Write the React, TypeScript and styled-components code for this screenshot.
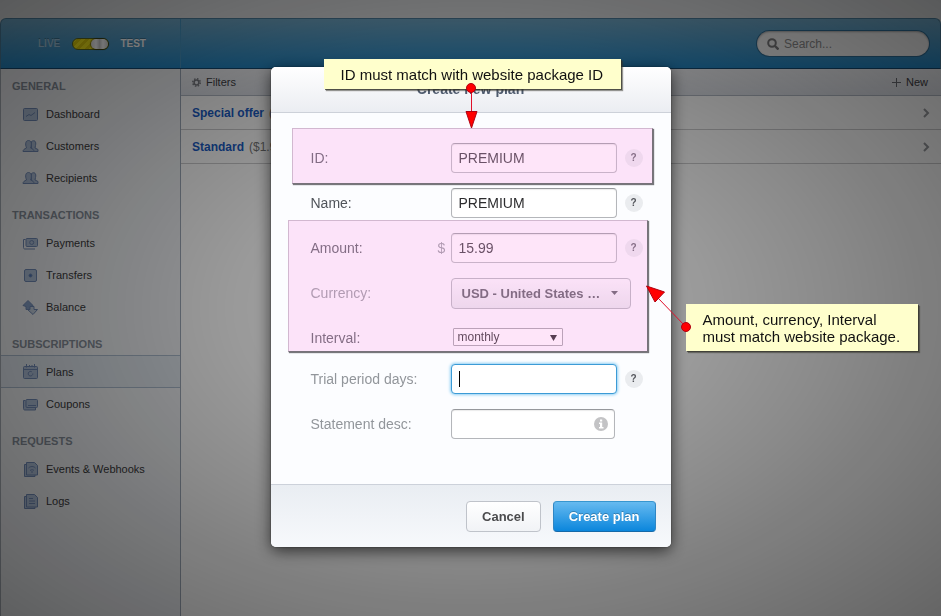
import React from "react";
import styled, { createGlobalStyle, css } from "styled-components";

const GlobalStyle = createGlobalStyle`
  * { box-sizing: border-box; }
  html, body, #root { height: 100%; }
  body {
    margin: 0;
    background: #dfe1e3;
    font-family: "Liberation Sans", Arial, sans-serif;
    overflow: hidden;
  }
  button, input, select { font-family: inherit; margin: 0; }
`;

/* ---------- dashboard ---------- */

const Page = styled.div`
  min-height: 100vh;
  padding-top: 18px;
  display: flex;
  flex-direction: column;
`;

const Window = styled.div`
  flex: 1;
  display: flex;
  flex-direction: column;
`;

const Header = styled.header`
  height: 51px;
  display: flex;
  align-items: center;
  justify-content: space-between;
  padding-right: 11px;
  border: 1px solid #4d7f9e;
  border-bottom-color: #154a72;
  border-radius: 6px 6px 0 0;
  background: linear-gradient(#72aac9, #2487c4);
`;

const ModeArea = styled.div`
  width: 180px;
  height: 100%;
  padding: 0 34px 0 37px;
  display: flex;
  align-items: center;
  justify-content: space-between;
  border-right: 1px solid #4795c2;
`;

const ModeLabel = styled.span<{ $on?: boolean }>`
  font-size: 10px;
  font-weight: bold;
  color: ${(p) => (p.$on ? "#ffffff" : "#9fc6df")};
  text-shadow: 0 -1px 0 rgba(0, 0, 0, 0.25);
`;

const Toggle = styled.button`
  width: 37px;
  height: 12px;
  padding: 0;
  display: flex;
  justify-content: flex-end;
  border: 1px solid #5d6a20;
  border-radius: 6px;
  background: repeating-linear-gradient(135deg, #f3e61a 0 3px, #ddcd0c 3px 6px);
`;

const Knob = styled.span`
  width: 17px;
  height: 10px;
  border-radius: 5px;
  background: linear-gradient(90deg, #e0e0e0, #ffffff 30%, #cfcfcf 50%, #ffffff 70%, #d5d5d5);
  box-shadow: 0 0 1px 1px rgba(0, 0, 0, 0.4);
`;

const SearchBox = styled.label`
  width: 172px;
  height: 25px;
  padding: 0 10px;
  display: flex;
  align-items: center;
  gap: 5px;
  border-radius: 13px;
  background: #f4f4f4;
  box-shadow: 0 0 0 1px #2e6d96, inset 0 1px 2px rgba(0, 0, 0, 0.3);
`;

const SearchInput = styled.input`
  flex: 1;
  min-width: 0;
  border: 0;
  padding: 0;
  background: transparent;
  font-size: 12px;
  &::placeholder { color: #8c8c8c; opacity: 1; }
`;

const Columns = styled.div`
  flex: 1;
  display: flex;
`;

const Sidebar = styled.nav`
  width: 181px;
  flex: none;
  padding-top: 5px;
  border-left: 1px solid #a5acb4;
  border-right: 1px solid #9ba6b5;
  background: #eceef1;
`;

const Group = styled.section`
  margin-bottom: 9px;
`;

const GroupTitle = styled.h2`
  margin: 0;
  padding-left: 11px;
  font-size: 11px;
  line-height: 24px;
  font-weight: bold;
  color: #858d98;
`;

const NavItem = styled.a<{ $active?: boolean }>`
  height: 32px;
  padding-left: 21px;
  display: flex;
  align-items: center;
  gap: 7px;
  font-size: 11px;
  color: #3a3a3c;
  text-decoration: none;
  border: solid transparent;
  border-width: 1px 0;
  ${(p) =>
    p.$active &&
    css`
      height: 33px;
      margin-top: -1px;
      background: #dee5ec;
      border-color: #a8b8ca;
    `}
`;

const Main = styled.main`
  flex: 1;
  background: #fcfcfc;
`;

const Toolbar = styled.div`
  height: 27px;
  padding: 0 13px 0 11px;
  display: flex;
  align-items: center;
  justify-content: space-between;
  border-bottom: 1px solid #b0b7c2;
  background: linear-gradient(#f0f1f4, #dcdfe6);
`;

const ToolButton = styled.button`
  padding: 0;
  display: flex;
  align-items: center;
  gap: 5px;
  border: 0;
  background: none;
  font-size: 11px;
  color: #3f4045;
`;

const PlanRow = styled.a`
  height: 34px;
  padding: 0 11px;
  display: flex;
  align-items: center;
  gap: 5px;
  border-bottom: 1px solid #c9c9cb;
  font-size: 12px;
  color: #777777;
  text-decoration: none;
  svg { margin-left: auto; }
`;

const PlanName = styled.strong`
  color: #1a5cc4;
`;

/* ---------- dialog ---------- */

const Shade = styled.div`
  position: fixed;
  inset: 0;
  display: flex;
  justify-content: center;
  align-items: flex-start;
  padding-top: 67px;
  background: radial-gradient(
    ellipse farthest-corner at center,
    rgba(0, 0, 0, 0.34) 0%,
    rgba(0, 0, 0, 0.39) 35%,
    rgba(0, 0, 0, 0.45) 55%,
    rgba(0, 0, 0, 0.51) 72%,
    rgba(0, 0, 0, 0.6) 100%
  );
`;

const Dialog = styled.div`
  position: relative;
  width: 400px;
  border-radius: 5px;
  background: #fcfdff;
  box-shadow: 0 4px 16px rgba(0, 0, 0, 0.65), 0 0 2px rgba(0, 0, 0, 0.5);
`;

const DialogTitle = styled.h1`
  margin: 0;
  border-radius: 5px 5px 0 0;
  border-bottom: 1px solid #cdd1d9;
  background: linear-gradient(#ffffff, #ebedf2);
  font-size: 14px;
  line-height: 45px;
  text-align: center;
  color: #4f5b6e;
`;

const Form = styled.form`
  display: flex;
  flex-direction: column;
`;

const Fields = styled.div`
  display: flex;
  flex-direction: column;
  gap: 15px;
  padding: 30px 28px 45px 40px;
`;

const Field = styled.div<{ $short?: boolean }>`
  height: ${(p) => (p.$short ? 26 : 30)}px;
  padding-top: ${(p) => (p.$short ? 4 : 0)}px;
  display: flex;
  align-items: center;
`;

const Label = styled.label<{ $muted?: boolean }>`
  width: 127px;
  font-size: 14px;
  color: ${(p) => (p.$muted ? "#92969b" : "#50545a")};
`;

const Prefix = styled.span`
  width: 13px;
  font-size: 14px;
  color: #92969b;
`;

const TextInput = styled.input<{ $focused?: boolean }>`
  width: 100%;
  height: 30px;
  padding: 0 7px;
  border: 1px solid #b4b6ba;
  border-top-color: #96989c;
  border-radius: 4px;
  outline: 0;
  background: #ffffff;
  font-size: 14px;
  color: #2c2c2e;
  box-shadow: inset 0 1px 1px rgba(0, 0, 0, 0.08);
  ${(p) =>
    p.$focused &&
    css`
      border-color: #3c9bd6;
      caret-color: transparent;
      box-shadow: 0 0 3px 1px #8fd0f4;
    `}
`;

const InputWrap = styled.div<{ $narrow?: boolean }>`
  position: relative;
  width: ${(p) => (p.$narrow ? 164 : 166)}px;
`;

const Caret = styled.span`
  position: absolute;
  left: 8px;
  top: 7px;
  width: 1px;
  height: 16px;
  background: #000000;
`;

const InfoBadge = styled.svg`
  position: absolute;
  right: 7px;
  top: 8px;
`;

const Help = styled.button`
  width: 18px;
  height: 18px;
  margin-left: 8px;
  padding: 0;
  border: 0;
  border-radius: 9px;
  background: #eaecef;
  font-size: 10px;
  line-height: 18px;
  font-weight: bold;
  color: #54565c;
`;

const SelectWrap = styled.div`
  position: relative;
  display: flex;
  align-items: center;
`;

const CurrencySelect = styled.select`
  appearance: none;
  width: 180px;
  height: 31px;
  padding: 0 28px 0 10px;
  border: 1px solid #b0b3b9;
  border-radius: 4px;
  background: linear-gradient(#fbfbfd, #e8eaee);
  font-size: 13px;
  font-weight: bold;
  color: #505258;
  text-overflow: clip;
`;

const IntervalSelect = styled.select`
  appearance: none;
  width: 110px;
  height: 18px;
  margin: 0 0 2px 2px;
  padding: 0 20px 0 4px;
  border: 1px solid #a0a0a4;
  border-radius: 1px;
  background: #ffffff;
  font-size: 12px;
  color: #222222;
`;

const SelectArrow = styled.svg<{ $right: number }>`
  position: absolute;
  right: ${(p) => p.$right}px;
  pointer-events: none;
`;

const Footer = styled.footer`
  height: 63px;
  padding-right: 15px;
  display: flex;
  align-items: center;
  justify-content: flex-end;
  gap: 12px;
  border-top: 1px solid #ccd1da;
  border-radius: 0 0 5px 5px;
  background: linear-gradient(#e9edf2, #f7f9fc);
`;

const Button = styled.button<{ $primary?: boolean }>`
  height: 31px;
  padding: 0 15px;
  border: 1px solid #bfc3ca;
  border-radius: 4px;
  background: linear-gradient(#ffffff, #f1f3f6);
  font-size: 13px;
  font-weight: bold;
  color: #4b4b4d;
  ${(p) =>
    p.$primary &&
    css`
      border-color: #3796cf #2f86c4 #1669a8;
      background: linear-gradient(#66baf0, #0b86dc);
      color: #ffffff;
      text-shadow: 0 -1px 0 rgba(0, 0, 0, 0.25);
    `}
`;

/* ---------- notes over the dialog ---------- */

const Highlight = styled.div<{ $x: number; $y: number; $w: number; $h: number }>`
  position: absolute;
  left: ${(p) => p.$x}px;
  top: ${(p) => p.$y}px;
  width: ${(p) => p.$w}px;
  height: ${(p) => p.$h}px;
  background: rgba(252, 168, 235, 0.3);
  border: 1px solid rgba(90, 60, 90, 0.25);
  border-right-color: #77727a;
  border-bottom-color: #77727a;
  box-shadow: 1px 1px 1px #77777b;
  pointer-events: none;
`;

const Note = styled.p<{ $x: number; $y: number }>`
  position: absolute;
  left: ${(p) => p.$x}px;
  top: ${(p) => p.$y}px;
  margin: 0;
  padding: 7px 18px 6px 17px;
  white-space: pre;
  background: #ffffcc;
  box-shadow: 1px 1px 0 rgba(50, 50, 40, 0.7), 2px 2px 1px rgba(50, 50, 40, 0.5);
  font-size: 15px;
  line-height: 17px;
  color: #111111;
`;

const Arrows = styled.svg`
  position: absolute;
  left: 0;
  top: 0;
  overflow: visible;
  pointer-events: none;
`;

/* ---------- icons ---------- */

type IconName = "chart" | "people" | "cash" | "safe" | "balance" | "calendar" | "coupon" | "hook" | "log";

const shapes: Record<IconName, React.ReactNode> = {
  chart: (
    <>
      <rect x="1.5" y="1.5" width="14" height="12" rx="1" />
      <path d="M4 9.500l3-2 2 1 4-3" fill="none" />
    </>
  ),
  people: (
    <>
      <path d="M9.500 2.500c3-2 5 0 4 4l-.5 2.500 3 1.500v2H9.500z" />
      <path d="M1 12.500c0-2 1.500-2.500 3.500-3.500C3 5 3.500 1.500 6.500 1.500S10 5 8.500 9c2 .8 3.500 1.500 3.500 3.500z" />
    </>
  ),
  cash: (
    <>
      <path d="M3.500 3.500h-2v8c0 1 .5 1.500 1.500 1.500h10" fill="none" />
      <rect x="4" y="2.500" width="11.500" height="8" rx="1" />
      <circle cx="9.700" cy="6.500" r="2" />
    </>
  ),
  safe: (
    <>
      <rect x="2.500" y="1.500" width="12" height="12" rx="1.500" />
      <circle cx="8.500" cy="7.500" r="1.500" fill="#4f77b8" />
    </>
  ),
  balance: (
    <>
      <path d="M6 .5l5 5-2 1v3H4v-3l-3-1z" fill="#86a0c6" />
      <path d="M8 6.500h4v3h3.500L11 14.500 5.500 9.500H8z" fill="#c5d0de" />
    </>
  ),
  calendar: (
    <>
      <rect x="1.500" y="2.500" width="14" height="12" rx="1" />
      <path d="M1.500 5.500h14M4.500 0v3.500M7.500 1v2M10 1v2M12.500 0v3.500" />
      <path d="M10.800 9.500a2.300 2.300 0 1 1-1-1.700" fill="none" />
    </>
  ),
  coupon: (
    <>
      <path d="M3.500 3.500h-2v8c0 1 .5 1.500 1.500 1.500h10.500v-2" />
      <rect x="4" y="2.500" width="11.500" height="8" rx="1" />
      <path d="M6 8.500h8" />
    </>
  ),
  hook: (
    <>
      <path d="M4 2.500H2.500v12H13v-1.500" />
      <path d="M4.500.500h8l3 3v9.500h-11z" />
      <path d="M6.500 6c2-2 5-2 7 0M8 8.500c1.500-1 3-1 4 0M10 9v2" fill="none" />
    </>
  ),
  log: (
    <>
      <path d="M4 2.500H2.500v12H13v-1.500" />
      <path d="M4.500.500h8l3 3v9.500h-11z" />
      <path d="M7 4.500h4M7 7h6M7 9.500h6" />
    </>
  ),
};

const NavIcon = ({ name }: { name: IconName }) => (
  <svg width="17" height="15" viewBox="0 0 17 15" fill="#adbed6" stroke="#7089b4" aria-hidden="true">
    {shapes[name]}
  </svg>
);

const Gear = () => (
  <svg width="9" height="9" viewBox="0 0 12 12" fill="none" stroke="#7b7d83" aria-hidden="true">
    <circle cx="6" cy="6" r="3.200" strokeWidth="2" />
    <circle cx="6" cy="6" r="5" strokeWidth="2" strokeDasharray="2 1.930" />
  </svg>
);

const Chevron = () => (
  <svg width="7" height="10" viewBox="0 0 7 10" fill="none" stroke="#96989c" strokeWidth="2" aria-hidden="true">
    <path d="M1 1l4 4-4 4" />
  </svg>
);

const groups: { title: string; items: { label: string; icon: IconName }[] }[] = [
  {
    title: "GENERAL",
    items: [
      { label: "Dashboard", icon: "chart" },
      { label: "Customers", icon: "people" },
      { label: "Recipients", icon: "people" },
    ],
  },
  {
    title: "TRANSACTIONS",
    items: [
      { label: "Payments", icon: "cash" },
      { label: "Transfers", icon: "safe" },
      { label: "Balance", icon: "balance" },
    ],
  },
  {
    title: "SUBSCRIPTIONS",
    items: [
      { label: "Plans", icon: "calendar" },
      { label: "Coupons", icon: "coupon" },
    ],
  },
  {
    title: "REQUESTS",
    items: [
      { label: "Events & Webhooks", icon: "hook" },
      { label: "Logs", icon: "log" },
    ],
  },
];

const HelpButton = () => (
  <Help type="button" aria-label="Help">
    ?
  </Help>
);

const Dashboard = () => (
  <Page>
    <Window>
      <Header>
        <ModeArea>
          <ModeLabel>LIVE</ModeLabel>
          <Toggle type="button" role="switch" aria-checked="true" aria-label="Test mode">
            <Knob />
          </Toggle>
          <ModeLabel $on>TEST</ModeLabel>
        </ModeArea>
        <SearchBox>
          <svg width="12" height="12" viewBox="0 0 12 12" fill="none" stroke="#7c7c7e" strokeWidth="2" aria-hidden="true">
            <circle cx="5" cy="5" r="3.800" />
            <path d="M8 8l3.500 3.500" strokeWidth="2.400" />
          </svg>
          <SearchInput type="text" placeholder="Search..." aria-label="Search" />
        </SearchBox>
      </Header>
      <Columns>
        <Sidebar>
          {groups.map((g) => (
            <Group key={g.title}>
              <GroupTitle>{g.title}</GroupTitle>
              {g.items.map((i) => (
                <NavItem key={i.label} href="#" $active={i.label === "Plans"}>
                  <NavIcon name={i.icon} />
                  {i.label}
                </NavItem>
              ))}
            </Group>
          ))}
        </Sidebar>
        <Main>
          <Toolbar>
            <ToolButton type="button">
              <Gear />
              Filters
            </ToolButton>
            <ToolButton type="button">
              <svg width="9" height="9" viewBox="0 0 9 9" stroke="#6b6d73" strokeWidth="1" aria-hidden="true">
                <path d="M4.500 0v9M0 4.500h9" />
              </svg>
              New
            </ToolButton>
          </Toolbar>
          <PlanRow href="#">
            <PlanName>Special offer</PlanName>
            <span>($9.99/month)</span>
            <Chevron />
          </PlanRow>
          <PlanRow href="#">
            <PlanName>Standard</PlanName>
            <span>($1.99/month)</span>
            <Chevron />
          </PlanRow>
        </Main>
      </Columns>
    </Window>
  </Page>
);

const PlanDialog = () => (
  <Dialog role="dialog" aria-labelledby="dialog-title">
    <DialogTitle id="dialog-title">Create new plan</DialogTitle>
    <Form>
      <Fields>
        <Field>
          <Label htmlFor="plan-id">ID:</Label>
          <Prefix />
          <InputWrap>
            <TextInput id="plan-id" defaultValue="PREMIUM" />
          </InputWrap>
          <HelpButton />
        </Field>
        <Field>
          <Label htmlFor="plan-name">Name:</Label>
          <Prefix />
          <InputWrap>
            <TextInput id="plan-name" defaultValue="PREMIUM" />
          </InputWrap>
          <HelpButton />
        </Field>
        <Field>
          <Label htmlFor="amount">Amount:</Label>
          <Prefix>$</Prefix>
          <InputWrap>
            <TextInput id="amount" defaultValue="15.99" />
          </InputWrap>
          <HelpButton />
        </Field>
        <Field>
          <Label htmlFor="currency" $muted>
            Currency:
          </Label>
          <Prefix />
          <SelectWrap>
            <CurrencySelect id="currency">
              <option>USD - United States …</option>
            </CurrencySelect>
            <SelectArrow $right={13} width="7" height="4" viewBox="0 0 7 4" fill="#505258">
              <path d="M0 0h7L3.500 4z" />
            </SelectArrow>
          </SelectWrap>
        </Field>
        <Field $short>
          <Label htmlFor="interval">Interval:</Label>
          <Prefix />
          <SelectWrap>
            <IntervalSelect id="interval">
              <option>monthly</option>
            </IntervalSelect>
            <SelectArrow $right={6} width="7" height="9" viewBox="0 0 7 9" fill="#111111">
              <path d="M0 1h7L3.500 7z" />
            </SelectArrow>
          </SelectWrap>
        </Field>
        <Field>
          <Label htmlFor="trial" $muted>
            Trial period days:
          </Label>
          <Prefix />
          <InputWrap>
            <TextInput id="trial" $focused />
            <Caret />
          </InputWrap>
          <HelpButton />
        </Field>
        <Field>
          <Label htmlFor="statement" $muted>
            Statement desc:
          </Label>
          <Prefix />
          <InputWrap $narrow>
            <TextInput id="statement" />
            <InfoBadge width="14" height="14" viewBox="0 0 14 14" aria-hidden="true">
              <circle cx="7" cy="7" r="7" fill="#c3c3c5" />
              <path d="M6 2.500h2.200v2H6zM5 5.500h3.200v4.500H9.500v1.500h-4.500V10H6V7H5z" fill="#ffffff" />
            </InfoBadge>
          </InputWrap>
        </Field>
      </Fields>
      <Footer>
        <Button type="button">Cancel</Button>
        <Button type="submit" $primary>
          Create plan
        </Button>
      </Footer>
    </Form>

    <Highlight $x={21} $y={61} $w={361} $h={56} />
    <Highlight $x={17} $y={153} $w={360} $h={132} />
    <Note $x={53} $y={-8}>ID must match with website package ID</Note>
    <Note $x={415} $y={237}>{"Amount, currency, Interval\nmust match website package."}</Note>
    <Arrows width="440" height="300" viewBox="0 0 440 300" fill="#ff0000" stroke="#b00010" aria-hidden="true">
      <path d="M200.500 21v24M415 260l-28-29" stroke="#e0102a" />
      <circle cx="200" cy="21" r="4.500" />
      <circle cx="415" cy="260" r="4.500" />
      <path d="M195 44.500h11L200.500 61z" />
      <path d="M375.500 219l18 6-9.500 10z" />
    </Arrows>
  </Dialog>
);

export default function App() {
  return (
    <>
      <GlobalStyle />
      <Dashboard />
      <Shade>
        <PlanDialog />
      </Shade>
    </>
  );
}
